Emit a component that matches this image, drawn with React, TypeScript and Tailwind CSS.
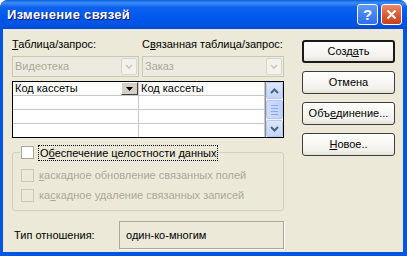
const Key = ({ children }: { children: string }) => <u className="underline underline-offset-[1px]">{children}</u>;

const Combo = ({ text, width }: { text: string; width: string }) => (
  <div className={`${width} h-[21px] flex items-center border border-[#C9C7BA] bg-[#EDEBE0]`}>
    <span className="flex-1 pl-[2px] text-[#ACA899]">{text}</span>
    <div className="w-[16px] h-[17px] mr-[1px] flex items-center justify-center border border-[#D8D6CB] bg-[#F3F2EC] rounded-[2px]">
      <svg width="8" height="5" viewBox="0 0 8 5">
        <path d="M1 1 L4 4 L7 1" fill="none" stroke="#C9C7BA" strokeWidth="1.6" />
      </svg>
    </div>
  </div>
);

const ScrollBtn = ({ up }: { up?: boolean }) => (
  <div className="h-[17px] flex items-center justify-center rounded-[2px] border border-[#B4C8F6] bg-[linear-gradient(to_bottom,#DCE6FC,#C3D4FB)]">
    <svg width="9" height="6" viewBox="0 0 9 6">
      <path d={up ? "M1 5 L4.5 1.5 L8 5" : "M1 1 L4.5 4.5 L8 1"} fill="none" stroke="#4D6185" strokeWidth="2" />
    </svg>
  </div>
);

const CheckBox = ({ disabled }: { disabled?: boolean }) => (
  <div
    className={`w-[13px] h-[13px] shrink-0 border ${disabled ? "border-[#CAC8BB] bg-[#ECE9D8]" : "border-[#A9A89C] bg-white"}`}
  />
);

const Button = ({ children, def }: { children: React.ReactNode; def?: boolean }) => (
  <div
    className={`h-[23px] flex items-center justify-center rounded-[3px] bg-[linear-gradient(to_bottom,#FFFFFF,#F2F1EB_80%,#E3E1D6)] ${
      def ? "border-2 border-[#1A1A1A]" : "border border-[#3D3D3D]"
    }`}
  >
    {children}
  </div>
);

export default function App() {
  const rows = [0, 1, 2, 3];
  return (
    <div className="w-[407px] h-[256px] flex flex-col bg-[#0055E5] rounded-t-[8px] overflow-hidden font-['Liberation_Sans',Arial,sans-serif] text-[11px] text-black">
      {/* title bar */}
      <div className="h-[29px] shrink-0 flex items-center pl-[7px] pr-[5px] bg-[linear-gradient(to_bottom,#0A5FE0_0%,#3D8EF5_10%,#0D62EE_25%,#0058EE_55%,#0054E3_85%,#0049D0_100%)]">
        <span className="flex-1 text-white font-bold text-[13px] [text-shadow:1px_1px_0_#0A1883] tracking-[0.3px]">
          Изменение связей
        </span>
        <div className="w-[21px] h-[21px] flex items-center justify-center rounded-[3px] border border-white bg-[linear-gradient(to_bottom,#5B98FA,#2F6FEA)] text-white font-bold text-[15px] leading-none">
          ?
        </div>
        <div className="ml-[3px] w-[21px] h-[21px] flex items-center justify-center rounded-[3px] border border-white bg-[linear-gradient(to_bottom,#E98A6C,#D9532B_60%,#C94220)]">
          <svg width="11" height="11" viewBox="0 0 11 11">
            <path d="M1.5 1.5 L9.5 9.5 M9.5 1.5 L1.5 9.5" stroke="white" strokeWidth="2.2" />
          </svg>
        </div>
      </div>

      {/* body */}
      <div className="flex-1 ml-[3px] mr-[4px] mb-[4px] bg-[#ECE9D8] flex">
        <div className="w-[281px] pl-[9px] pt-[8px] flex flex-col">
          <div className="flex h-[14px] leading-[14px]">
            <span className="w-[130px]">
              <Key>Т</Key>аблица/запрос:
            </span>
            <span>
              С<Key>в</Key>язанная таблица/запрос:
            </span>
          </div>
          <div className="mt-[5px] flex gap-[3px]">
            <Combo text="Видеотека" width="w-[127px]" />
            <Combo text="Заказ" width="w-[142px]" />
          </div>

          {/* grid */}
          <div className="mt-[4px] w-[272px] h-[57px] border border-black bg-white flex overflow-hidden">
            <div className="flex-1 flex flex-col">
              {rows.map((r) => (
                <div key={r} className="h-[14px] shrink-0 flex border-b border-[#C8C8C8]">
                  <div className="w-[126px] flex items-center border-r border-[#C8C8C8]">
                    {r === 0 && (
                      <>
                        <span className="flex-1 pl-[2px] leading-[13px]">Код кассеты</span>
                        <div className="w-[17px] h-[13px] flex items-center justify-center bg-[#D4D0C8] border-t border-l border-white border-r border-b border-r-[#404040] border-b-[#404040]">
                          <svg width="7" height="4" viewBox="0 0 7 4">
                            <path d="M0 0 H7 L3.5 4 Z" fill="black" />
                          </svg>
                        </div>
                      </>
                    )}
                  </div>
                  <div className="flex-1 flex items-center border-r border-[#C8C8C8]">
                    {r === 0 && <span className="pl-[2px] leading-[13px]">Код кассеты</span>}
                  </div>
                </div>
              ))}
            </div>
            <div className="w-[18px] flex flex-col bg-[#F4F3EE] border-l border-[#8F8F8F]">
              <ScrollBtn up />
              <div className="mt-[1px] h-[19px] flex flex-col items-center justify-center gap-[2px] rounded-[2px] border border-[#B4C8F6] bg-[linear-gradient(to_right,#D0DCFC,#BFD1FA)]">
                {[0, 1, 2, 3].map((i) => (
                  <div key={i} className="w-[7px] h-[1px] bg-[#8CA6E8]" />
                ))}
              </div>
              <div className="flex-1" />
              <ScrollBtn />
            </div>
          </div>

          {/* group */}
          <fieldset className="mt-[6px] w-[272px] border border-[#D0D0BF] rounded-[3px]">
            <legend className="ml-[7px] px-[1px] flex items-center h-[17px]">
              <CheckBox />
              <span className="ml-[4px] px-[1px] leading-[14px] border border-dotted border-black">
                О<Key>б</Key>еспечение целостности данных
              </span>
            </legend>
            <div className="pt-[8px] pb-[8px] pl-[8px] flex flex-col gap-[7px] text-[#ACA899]">
              <div className="h-[13px] flex items-center">
                <CheckBox disabled />
                <span className="ml-[5px]">
                  <Key>к</Key>аскадное обновление связанных полей
                </span>
              </div>
              <div className="h-[13px] flex items-center">
                <CheckBox disabled />
                <span className="ml-[5px]">
                  ка<Key>с</Key>кадное удаление связанных записей
                </span>
              </div>
            </div>
          </fieldset>

          <div className="mt-[10px] flex items-center">
            <span className="w-[107px] pl-[2px]">Тип отношения:</span>
            <div className="w-[165px] h-[28px] flex items-center pl-[6px] border border-[#ACA899] shadow-[1px_1px_0_#FFFFFF]">
              один-ко-многим
            </div>
          </div>
        </div>

        <div className="ml-[18px] w-[93px] pt-[11px] flex flex-col gap-[8px]">
          <Button def>
            Созд<Key>а</Key>ть
          </Button>
          <Button>Отмена</Button>
          <Button>
            Объ<Key>е</Key>динение...
          </Button>
          <Button>
            <Key>Н</Key>овое..
          </Button>
        </div>
      </div>
    </div>
  );
}
